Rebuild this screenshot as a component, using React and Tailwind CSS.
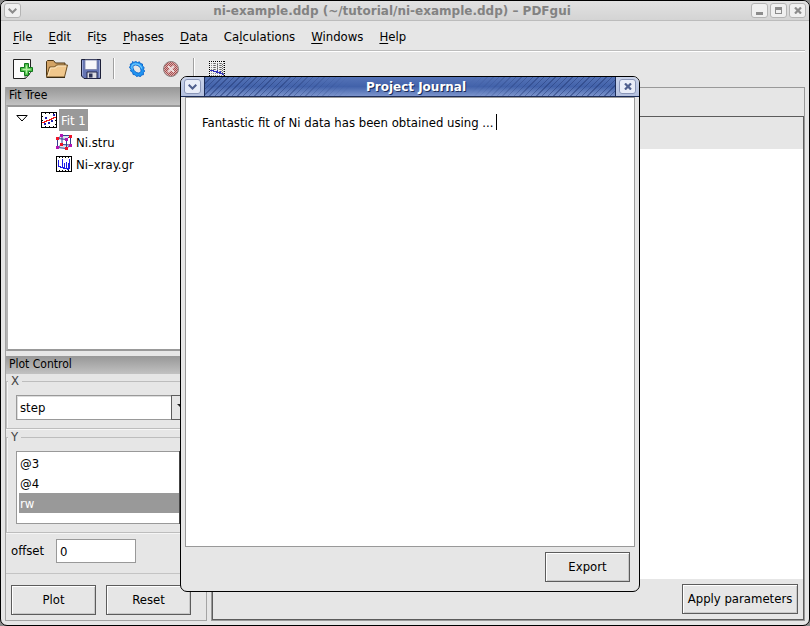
import React from "react";
import clsx from "clsx";

const MENUS = [
  ["", "F", "ile"],
  ["", "E", "dit"],
  ["Fi", "t", "s"],
  ["", "P", "hases"],
  ["", "D", "ata"],
  ["Ca", "l", "culations"],
  ["", "W", "indows"],
  ["", "H", "elp"],
];

function PushButton({ className, children }) {
  return (
    <button
      type="button"
      className={clsx(
        "h-[30px] shrink-0 border border-[#5c5c5c] bg-[#e6e6e6] text-center shadow-[inset_1px_1px_0_#ffffff,inset_-1px_-1px_0_#c8c8c8]",
        className
      )}
    >
      {children}
    </button>
  );
}

function FrameButton({ label, active, children }) {
  return (
    <button
      type="button"
      aria-label={label}
      className={clsx(
        "flex h-[15px] w-[17px] items-center justify-center rounded-[3px] border",
        active
          ? "border-[#8a96b8] bg-[#e9edf8] text-[#4f5f8e]"
          : "border-[#b4b4b4] bg-[#f0f0f0] text-[#8c8c8c]"
      )}
    >
      {children}
    </button>
  );
}

const Chevron = () => (
  <svg width="9" height="6" viewBox="0 0 9 6" fill="none" stroke="currentColor" strokeWidth="2">
    <path d="M0.7 0.7 4.5 4.5 8.3 0.7" />
  </svg>
);

const Cross = () => (
  <svg width="8" height="7" viewBox="0 0 8 7" fill="none" stroke="currentColor" strokeWidth="2.2">
    <path d="M1 .5 7 6.5M7 .5 1 6.5" />
  </svg>
);

const Minimize = () => (
  <svg width="9" height="9" viewBox="0 0 9 9" fill="currentColor">
    <path d="M1 6h7v3H1z" />
  </svg>
);

const Maximize = () => (
  <svg width="7" height="7" viewBox="0 0 7 7" fill="currentColor">
    <path fillRule="evenodd" d="M0 0h7v7H0zM1 3h5v3H1z" />
  </svg>
);

const NewIcon = () => (
  <svg width="20" height="20" viewBox="0 0 20 20">
    <path d="M.5.5h17v13l-5 6H.5z" fill="#fdfdfd" stroke="#222" />
    <path d="M12 19.500V15h5z" fill="#d8d8d8" stroke="#444" strokeWidth=".7" />
    <path d="M11.500 4.500h4v4h4v4h-4v4h-4v-4h-4v-4h4z" fill="#4fbf4a" stroke="#117a1c" />
    <path d="M13.500 6.500v8M9.500 10.500h8" stroke="#b4f0a4" strokeWidth="1.400" />
  </svg>
);

const FolderIcon = () => (
  <svg width="24" height="20" viewBox="0 0 24 20">
    <path d="M1.500 17.500v-15l1-1h6l2 2.500h9.500v5" fill="#d3a364" stroke="#4b3514" />
    <path d="M1.500 18 4.500 8h5l2-2h11l-3 12z" fill="#f0c78c" stroke="#6b4d22" />
    <path d="M3 17 5.500 9h5l2-2h8.500" fill="none" stroke="#fde8c2" />
    <path d="M1.500 18.500H20" stroke="#3a2a12" />
  </svg>
);

const SaveIcon = () => (
  <svg width="20" height="20" viewBox="0 0 20 20">
    <path d="M.5.5h19v19H3l-2.500-2.500z" fill="#6575b4" stroke="#1c1f38" />
    <path d="M1.500 1.500v15M18.500 1.500v17" stroke="#9da9d8" />
    <path d="M4 1h12v9.500H4z" fill="#f7f7fb" stroke="#7a82a8" strokeWidth=".8" />
    <path d="M6 13h10v6.500H6z" fill="#dcdce2" stroke="#23274a" />
    <path d="M8 14.500h3.500v4H8z" fill="#2d3358" />
  </svg>
);

const GearIcon = () => (
  <svg width="16" height="16" viewBox="0 0 16 16">
    <path
      fillRule="evenodd"
      d="M3.500.5 5 1.500 6.500.3 8.500 1.500l2-.7.8 1.700 2.200.5v2l1.700 1.500-.7 1.800 1.300 2-1.500 1.200.2 2.200-2 .3-1 1.700-2-.8-2 .6-1.300-1.700-2.200-.3-.3-2L1.500 10l.6-1.800L.3 6.500l1.200-1.700L1.300 3l1.900-.5zM6.500 4C4 4 3.500 6 4.300 8s3 4 5.200 4 3-2 2.200-4.200S8.800 4 6.500 4z"
      fill="#1f94f2"
      stroke="#0a62c8"
      strokeWidth=".9"
    />
    <path d="M3.300 8.500C2 5.500 3 2.800 6.300 2.800c3 0 5.700 2 6.500 4.700" fill="none" stroke="#6fcbff" strokeWidth="1.200" />
  </svg>
);

const StopIcon = () => (
  <svg width="16" height="16" viewBox="0 0 16 16">
    <defs>
      <pattern id="stop-dots" width="2" height="2" patternUnits="userSpaceOnUse">
        <path d="M0 0h1v1H0zM1 1h1v1H1z" fill="#8e2020" fillOpacity=".7" />
      </pattern>
    </defs>
    <circle cx="8" cy="8" r="7.500" fill="#dcb0b0" stroke="#8c8080" />
    <circle cx="8" cy="8" r="7" fill="url(#stop-dots)" />
    <path d="m5 5 6 6m0-6-6 6" stroke="#f4ecec" strokeOpacity=".85" strokeWidth="2" />
  </svg>
);

const DisabledPlot = () => (
  <svg width="16" height="16" viewBox="0 0 16 16" shapeRendering="crispEdges">
    <path d="M0 0h16v16H0z" fill="#f2f2f2" />
    <path d="M.5 0v16M2.500 0v16M4.500 0v16M6.500 0v16M8.500 0v16M10.500 0v16M12.500 0v16M14.500 0v16" stroke="#8a8a8a" strokeDasharray="1 1" />
    <path d="M0 .5h16M.5 0v16M15.500 0v16M0 15.500h16" stroke="#000" strokeDasharray="1 1" />
    <path d="M5.500 2v9M8.500 3v9M11.500 2v11M13.500 3v11" stroke="#666" strokeDasharray="1 1" />
    <path d="M1 9.500h3v1h3v1h3v1h3v1h2M8.500 9v3M11.500 10v3" fill="none" stroke="#3030b8" />
  </svg>
);

const DataPlot = () => (
  <svg width="16" height="16" viewBox="0 0 16 16" shapeRendering="crispEdges">
    <path d="M.5.5h15v15H.5z" fill="#fff" stroke="#000" />
    <path d="M3.500 1v1M6.500 1v1M9.500 1v1M12.500 1v1M3.500 14v1M6.500 14v1M9.500 14v1M12.500 14v1" stroke="#000" />
    <path d="M2.500 4v7M2 10.500h2M4.500 10v2M5.500 11v1M6.500 3v9M7.500 11v2M8.500 7v6M9.500 12v1M10.500 6v7M11.500 12v2M12.500 7v7M13.500 3v10" fill="none" stroke="#1a1ae6" />
  </svg>
);

const FitIcon = () => (
  <svg width="16" height="16" viewBox="0 0 16 16" shapeRendering="crispEdges">
    <path d="M.5.5h15v15H.5z" fill="#fff" stroke="#000" />
    <path d="M4.500 1v1M8.500 1v1M12.500 1v1M4.500 14v1M8.500 14v1M12.500 14v1M1 4.500h1M1 8.500h1M14 8.500h1M14 12.500h1" stroke="#000" />
    <path d="M4 5h2v2H4zM12 2h2v2h-2zM3 11h2v2H3zM7 10h2v2H7zM10 8h2v2h-2z" fill="#2020b4" />
    <path d="M1 10.500h2v-1h2v-1h3v-1h2v-1h2v-1h3" fill="none" stroke="#f01414" />
  </svg>
);

const CrystalIcon = () => (
  <svg width="16" height="16" viewBox="0 0 16 16">
    <path d="M1.500 4.500 6 1.500h8.500l-4 4zM1.500 4.500v9M6 1.500v9M14.500 1.500V11M10.500 5v10M1.500 13.500 6 10.500l8.500.5-4 3.500z" fill="#c8d0e4" fillOpacity=".6" stroke="#34408c" />
    <path d="M0 3h3v3H0zM13 1h3v3h-3zM4 9h3v3H4zM9 13h3v3H9z" fill="#f01428" />
    <path d="M4 0h3v3H4zM9 4h3v3H9zM0 12h3v3H0zM13 10h3v3h-3z" fill="#b414b4" />
  </svg>
);

function ToolButton({ label, children }) {
  return (
    <button type="button" aria-label={label} className="flex h-[34px] w-[34px] items-center justify-center">
      {children}
    </button>
  );
}

const ToolSeparator = () => <span className="mx-[5px] h-[21px] w-[2px] border-l border-[#a0a0a0] bg-white" />;

function PaneHeader({ children }) {
  return (
    <h2 className="h-[18px] bg-linear-to-b from-[#979797] to-[#c2c2c2] pl-[3px] text-xs leading-4">{children}</h2>
  );
}

function Group({ title, children }) {
  return (
    <fieldset className="min-w-0 border border-r-0 border-[#bdbdbd] pr-2 pb-2 pl-[9px] shadow-[inset_1px_0_0_#f6f6f6,0_1px_0_#f6f6f6]">
      <legend className="-ml-2 px-[3px] text-[13px] leading-[14px] text-[#444]">{title}</legend>
      <div className="flex pt-[7px]">{children}</div>
    </fieldset>
  );
}

function TreeItem({ icon, label, child, selected }) {
  return (
    <li role="treeitem" aria-selected={!!selected} className={clsx("flex h-[22px] items-center gap-[2px]", child ? "pl-[48px]" : "pl-2")}>
      {!child && (
        <svg width="12" height="7" viewBox="0 0 12 7" className="mr-[11px] mb-1" fill="#fff" stroke="#000">
          <path d="M.8.5h10.400L6 6z" />
        </svg>
      )}
      {icon}
      <span className={clsx("h-[22px] px-[2px] leading-6", selected && "bg-[#999] text-white")}>{label}</span>
    </li>
  );
}

function JournalDialog() {
  return (
    <section
      role="dialog"
      aria-labelledby="journal-title"
      className="absolute top-[76px] left-[180px] flex h-[516px] w-[460px] flex-col overflow-hidden rounded-[7px] border border-black bg-[#e6e6e6]"
    >
      <header className="flex h-5 shrink-0 border-b border-[#1c2c58] bg-linear-to-b from-[#c9d3ea] to-[#b4c0de]">
        <div className="flex w-[23px] items-center justify-center">
          <FrameButton label="Window menu" active>
            <Chevron />
          </FrameButton>
        </div>
        <div className="flex min-w-0 flex-1 items-center border-x border-[#1c2c58] bg-linear-to-b from-[#5674b8] via-[#4262aa] to-[#7c94cc]">
          <span className="h-full flex-1 bg-[repeating-linear-gradient(135deg,#22387480_0px,#22387480_1px,transparent_1px,transparent_4px)] mask-r-from-50%" />
          <h1 id="journal-title" className="pr-1 pl-4 font-['DejaVu_Sans',sans-serif] text-xs font-bold text-white [text-shadow:1px_1px_0_#1c2c58]">
            Project Journal
          </h1>
          <span className="h-full flex-1 bg-[repeating-linear-gradient(135deg,#22387480_0px,#22387480_1px,transparent_1px,transparent_4px)] mask-l-from-50%" />
        </div>
        <div className="flex w-[23px] items-center justify-center">
          <FrameButton label="Close journal" active>
            <Cross />
          </FrameButton>
        </div>
      </header>
      <div className="relative flex flex-1 px-1">
        <textarea
          aria-label="Project journal"
          defaultValue="Fantastic fit of Ni data has been obtained using ..."
          className="flex-1 resize-none border border-[#999] bg-white px-4 py-[17px] leading-4 outline-none"
        />
        <span className="absolute top-[17px] left-[315px] h-4 w-px bg-black" />
      </div>
      <footer className="flex justify-end px-[9px] pt-[5px] pb-[9px]">
        <PushButton className="w-[85px]">Export</PushButton>
      </footer>
    </section>
  );
}

export default function App() {
  return (
    <div className="relative h-screen overflow-hidden bg-[#8a8a8a] font-['DejaVu_Sans_Condensed','DejaVu_Sans',sans-serif] text-[13px] leading-4 text-black">
      <div className="flex h-full flex-col overflow-hidden rounded-[7px] border border-black bg-[#e6e6e6]">
        <header className="flex h-5 shrink-0 items-center border-b border-[#bcbcbc] bg-linear-to-b from-[#e2e2e2] to-[#d4d4d4] px-[3px]">
          <FrameButton label="Window menu">
            <Chevron />
          </FrameButton>
          <h1 className="flex-1 pt-px pl-3 text-center font-['DejaVu_Sans',sans-serif] text-xs font-bold text-[#828282]">
            ni-example.ddp (~/tutorial/ni-example.ddp) – PDFgui
          </h1>
          <div className="flex gap-[2px]">
            <FrameButton label="Minimize">
              <Minimize />
            </FrameButton>
            <FrameButton label="Maximize">
              <Maximize />
            </FrameButton>
            <FrameButton label="Close">
              <Cross />
            </FrameButton>
          </div>
        </header>

        <nav aria-label="Main menu" className="mx-1 flex h-[30px] shrink-0 border-b border-[#bcbcbc] pt-[2px]">
          {MENUS.map(([before, key, after]) => (
            <button key={key + after} type="button" className="px-2">
              {before}
              <u className="underline-offset-2">{key}</u>
              {after}
            </button>
          ))}
        </nav>

        <div className="mx-1 flex h-9 shrink-0 items-center border-t border-white pb-[2px] pl-px">
          <ToolButton label="New project"><NewIcon /></ToolButton>
          <ToolButton label="Open project"><FolderIcon /></ToolButton>
          <ToolButton label="Save project"><SaveIcon /></ToolButton>
          <ToolSeparator />
          <ToolButton label="Run fit"><GearIcon /></ToolButton>
          <ToolButton label="Stop fit"><StopIcon /></ToolButton>
          <ToolSeparator />
          <ToolButton label="Quick plot"><DisabledPlot /></ToolButton>
        </div>

        <main className="flex min-h-0 flex-1 gap-1 px-1 pb-1">
          <aside className="flex w-[202px] shrink-0 flex-col border border-t-0 border-[#a4a4a4]">
            <PaneHeader>Fit Tree</PaneHeader>
            <ul role="tree" aria-label="Fit tree" className="flex-1 border-2 border-[#999] border-l-[#b4b4b4] bg-white pt-[2px]">
              <TreeItem icon={<FitIcon />} label="Fit 1" selected />
              <TreeItem icon={<CrystalIcon />} label="Ni.stru" child />
              <TreeItem icon={<DataPlot />} label="Ni–xray.gr" child />
            </ul>
            <div className="h-[5px]" />
            <PaneHeader>Plot Control</PaneHeader>
            <Group title="X">
              <div className="relative flex flex-1">
                <select
                  aria-label="X"
                  defaultValue="step"
                  className="h-[25px] flex-1 appearance-none border border-[#999] bg-white pl-[3px] shadow-[inset_1px_1px_0_#ddd]"
                >
                  <option>step</option>
                </select>
                <span className="pointer-events-none absolute inset-y-0 right-0 flex w-[27px] items-center justify-center border border-[#5c5c5c] bg-[#e6e6e6]">
                  <svg width="16" height="8" viewBox="0 0 16 8">
                    <path d="M0 0h16L8 8z" fill="#222" />
                  </svg>
                </span>
              </div>
            </Group>
            <div className="mt-px">
              <Group title="Y">
                <select
                  aria-label="Y"
                  multiple
                  defaultValue={["rw"]}
                  className="h-[73px] w-[163px] overflow-hidden rounded-none border border-r-0 border-[#999] bg-white py-px pl-[2px] outline-none"
                >
                  {["@3", "@4", "rw"].map((name) => (
                    <option
                      key={name}
                      className="h-5 min-h-5 px-px pt-[3px] pb-px leading-4 checked:bg-[linear-gradient(#999,#999)] checked:[-webkit-text-fill-color:#fff]"
                    >
                      {name}
                    </option>
                  ))}
                </select>
                <span className="w-4 border border-[#444]" />
              </Group>
            </div>
            <div className="flex items-center gap-3 border-b border-[#c4c4c4] pt-[6px] pb-[10px] pl-[5px]">
              <label htmlFor="offset">offset</label>
              <input id="offset" defaultValue="0" className="h-6 w-20 border border-[#999] bg-white px-[3px] outline-none" />
            </div>
            <div className="flex gap-[10px] px-[5px] pt-[11px] pb-[5px]">
              <PushButton className="w-[85px]">Plot</PushButton>
              <PushButton className="w-[85px]">Reset</PushButton>
            </div>
          </aside>

          <section aria-label="Parameters" className="flex min-w-0 flex-1 flex-col border border-[#999] pt-7">
            <div className="flex flex-1 flex-col border border-[#5c5c5c]">
              <div className="h-8" />
              <div className="flex-1 bg-white" />
              <div className="flex justify-end p-[5px]">
                <PushButton className="w-[116px]">Apply parameters</PushButton>
              </div>
            </div>
          </section>
        </main>
      </div>
      <JournalDialog />
    </div>
  );
}
